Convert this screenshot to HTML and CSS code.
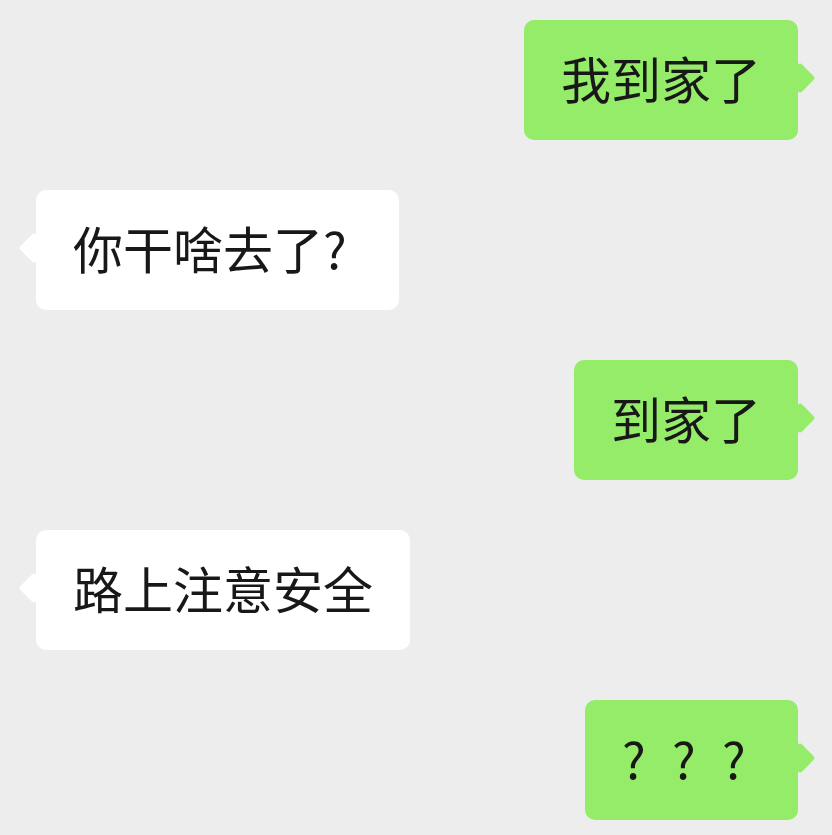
FILE: index.html
```html
<!DOCTYPE html>
<html lang="zh-CN">
<head>
    <meta charset="UTF-8">
    <meta name="viewport" content="width=device-width, initial-scale=1.0">
    <title>聊天</title>
    <link rel="stylesheet" href="styles.css">
</head>
<body>
    <div class="chat">
        <div class="row me">
            <div class="bubble">我到家了</div>
        </div>
        <div class="row other">
            <div class="bubble">你干啥去了<span class="q">?</span></div>
        </div>
        <div class="row me">
            <div class="bubble">到家了</div>
        </div>
        <div class="row other">
            <div class="bubble">路上注意安全</div>
        </div>
        <div class="row me">
            <div class="bubble qs"><span class="q">?</span><span class="q">?</span><span class="q">?</span></div>
        </div>
    </div>
</body>
</html>
```

FILE: styles.css
```css
body {
    margin: 0;
    background-color: #ededed;
    font-family: "Noto Sans CJK SC", "Noto Sans", sans-serif;
    color: #181818;
}
.chat {
    display: flex;
    flex-direction: column;
    gap: 50px;
    padding: 20px 34px 20px 36px;
}
.row {
    display: flex;
}
.row.me {
    justify-content: flex-end;
}
.bubble {
    position: relative;
    height: 120px;
    line-height: 114px;
    padding: 0 37px 6px;
    box-sizing: border-box;
    border-radius: 10px;
    font-size: 50px;
    white-space: nowrap;
}
/* little arrow on the side */
.bubble::before {
    content: "";
    position: absolute;
    top: 50%;
    width: 22px;
    height: 22px;
    margin-top: -13px;
    border-radius: 3px;
    transform: rotate(45deg);
}
.me .bubble {
    background-color: #95ec69;
}
.me .bubble::before {
    right: -13px;
    background-color: #95ec69;
}
.other .bubble {
    background-color: #fff;
}
.other .bubble::before {
    left: -13px;
    background-color: #fff;
}
.q {
    display: inline-block;
    width: 39px;
    text-align: left;
}
.qs .q {
    width: 50px;
}
.qs .q:last-child {
    width: 39px;
}
```
